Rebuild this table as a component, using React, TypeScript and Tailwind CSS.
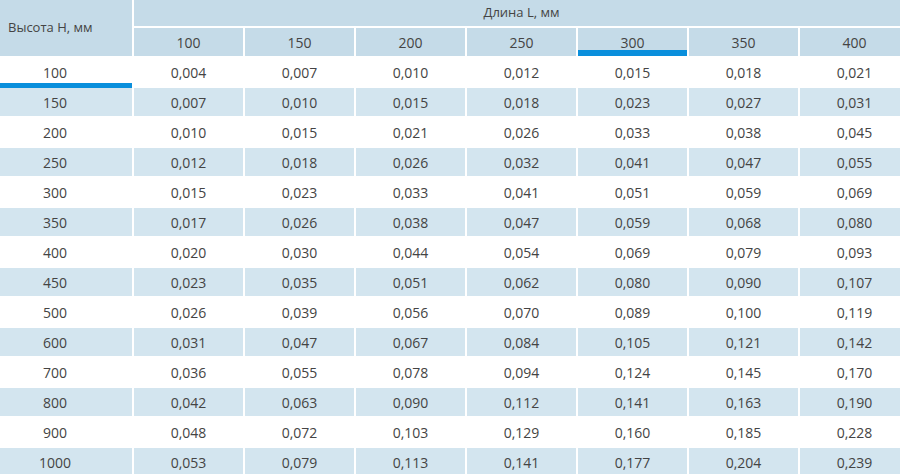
const lengths = ["100", "150", "200", "250", "300", "350", "400"];

const rows: [string, string[]][] = [
  ["100", ["0,004", "0,007", "0,010", "0,012", "0,015", "0,018", "0,021"]],
  ["150", ["0,007", "0,010", "0,015", "0,018", "0,023", "0,027", "0,031"]],
  ["200", ["0,010", "0,015", "0,021", "0,026", "0,033", "0,038", "0,045"]],
  ["250", ["0,012", "0,018", "0,026", "0,032", "0,041", "0,047", "0,055"]],
  ["300", ["0,015", "0,023", "0,033", "0,041", "0,051", "0,059", "0,069"]],
  ["350", ["0,017", "0,026", "0,038", "0,047", "0,059", "0,068", "0,080"]],
  ["400", ["0,020", "0,030", "0,044", "0,054", "0,069", "0,079", "0,093"]],
  ["450", ["0,023", "0,035", "0,051", "0,062", "0,080", "0,090", "0,107"]],
  ["500", ["0,026", "0,039", "0,056", "0,070", "0,089", "0,100", "0,119"]],
  ["600", ["0,031", "0,047", "0,067", "0,084", "0,105", "0,121", "0,142"]],
  ["700", ["0,036", "0,055", "0,078", "0,094", "0,124", "0,145", "0,170"]],
  ["800", ["0,042", "0,063", "0,090", "0,112", "0,141", "0,163", "0,190"]],
  ["900", ["0,048", "0,072", "0,103", "0,129", "0,160", "0,185", "0,228"]],
  ["1000", ["0,053", "0,079", "0,113", "0,141", "0,177", "0,204", "0,239"]],
];

export default function App() {
  return (
    <div className="h-[474px] w-[900px] overflow-hidden bg-white font-['Open_Sans',sans-serif] text-[14px] text-[#444]">
      <div className="grid w-[909px] grid-cols-[132px_repeat(7,109px)] grid-rows-[26px_28px] auto-rows-[28px] gap-[2px]">
        <div className="row-span-2 flex items-center bg-[#c5dbe8] pl-[8px] text-[13px]">
          Высота H, мм
        </div>
        <div className="col-span-7 flex items-center justify-center bg-[#c5dbe8] text-[13px]">
          Длина L, мм
        </div>
        {lengths.map((l, i) => (
          <div
            key={l}
            className="relative flex items-center justify-center bg-[#c5dbe8]"
          >
            {l}
            {i === 4 && (
              <span className="absolute inset-x-0 bottom-0 h-[6px] bg-[#0a8fdc]" />
            )}
          </div>
        ))}
        {rows.map(([h, vals], r) => {
          const bg = r % 2 === 1 ? "bg-[#d3e5ef]" : "bg-white";
          return [
            <div
              key={h}
              className={`relative flex items-center justify-center pr-[22px] ${bg}`}
            >
              {h}
              {r === 0 && (
                <span className="absolute inset-x-0 bottom-[-2px] h-[5px] bg-[#0a8fdc]" />
              )}
            </div>,
            ...vals.map((v, c) => (
              <div
                key={h + "-" + c}
                className={`flex items-center justify-center ${bg}`}
              >
                {v}
              </div>
            )),
          ];
        })}
      </div>
    </div>
  );
}
